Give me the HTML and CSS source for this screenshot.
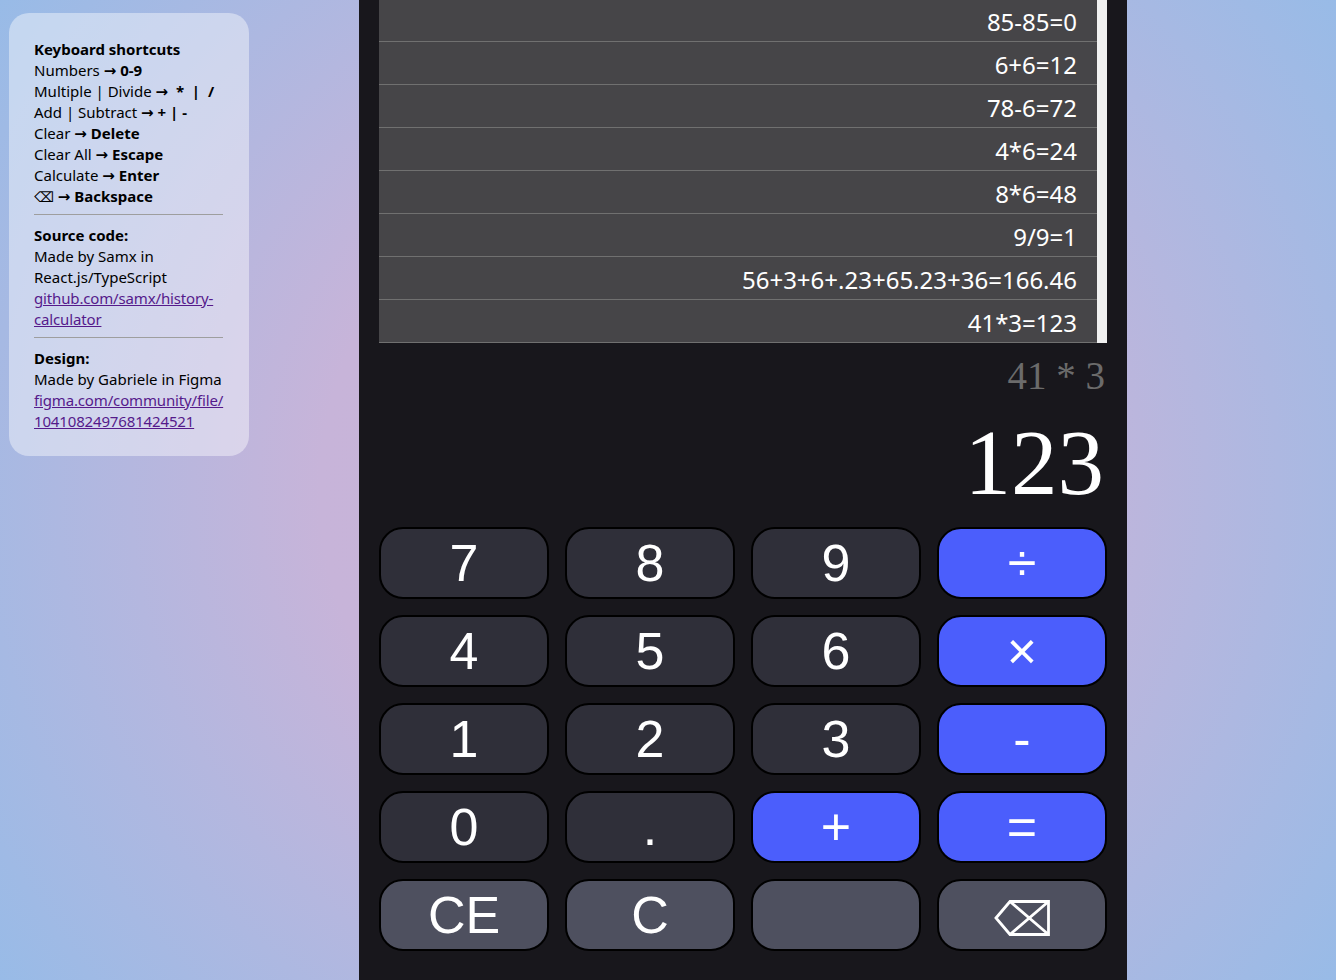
FILE: index.html
```html
<!DOCTYPE html>
<html lang="en">
<head>
<meta charset="utf-8">
<title>History Calculator</title>
<link rel="stylesheet" href="styles.css">
</head>
<body>
<div class="page">
  <aside class="info">
    <section class="info-section">
      <div class="info-title">Keyboard shortcuts</div>
      <div>Numbers <span class="arrow">→</span> <b>0-9</b></div>
      <div>Multiple | Divide <span class="arrow">→</span> <b>&nbsp;*&nbsp; |&nbsp; /</b></div>
      <div>Add | Subtract <span class="arrow">→</span> <b>+ | -</b></div>
      <div>Clear <span class="arrow">→</span> <b>Delete</b></div>
      <div>Clear All <span class="arrow">→</span> <b>Escape</b></div>
      <div>Calculate <span class="arrow">→</span> <b>Enter</b></div>
      <div><span class="bs">⌫</span> <span class="arrow">→</span> <b>Backspace</b></div>
    </section>
    <hr class="divider">
    <section class="info-section">
      <div class="info-title">Source code:</div>
      <div>Made by Samx in React.js/TypeScript</div>
      <a class="info-link" href="#">github.com/samx/history-calculator</a>
    </section>
    <hr class="divider">
    <section class="info-section">
      <div class="info-title">Design:</div>
      <div>Made by Gabriele in Figma</div>
      <a class="info-link" href="#">figma.com/community/file/<wbr>1041082497681424521</a>
    </section>
  </aside>

  <main class="calc">
    <div class="history-wrap">
      <ul class="history">
        <li class="history-row">85-85=0</li>
        <li class="history-row">6+6=12</li>
        <li class="history-row">78-6=72</li>
        <li class="history-row">4*6=24</li>
        <li class="history-row">8*6=48</li>
        <li class="history-row">9/9=1</li>
        <li class="history-row">56+3+6+.23+65.23+36=166.46</li>
        <li class="history-row">41*3=123</li>
      </ul>
      <div class="scrollbar"></div>
    </div>

    <div class="expr">41 * 3</div>
    <div class="result">123</div>

    <div class="keys">
      <button class="key num">7</button>
      <button class="key num">8</button>
      <button class="key num">9</button>
      <button class="key op">÷</button>
      <button class="key num">4</button>
      <button class="key num">5</button>
      <button class="key num">6</button>
      <button class="key op">×</button>
      <button class="key num">1</button>
      <button class="key num">2</button>
      <button class="key num">3</button>
      <button class="key op">-</button>
      <button class="key num">0</button>
      <button class="key num">.</button>
      <button class="key op">+</button>
      <button class="key op">=</button>
      <button class="key fn">CE</button>
      <button class="key fn">C</button>
      <button class="key fn"></button>
      <button class="key fn" aria-label="Backspace">
        <svg class="bs-icon" width="56" height="36" viewBox="0 0 56 36" fill="none" stroke="#fff" stroke-width="2.8" stroke-linejoin="miter">
          <path d="M2 18 L16 1.5 L54.5 1.5 L54.5 34.5 L16 34.5 Z"/>
          <path d="M16 34.5 L54.5 1.5 M16 1.5 L54.5 34.5"/>
        </svg>
      </button>
    </div>
  </main>
</div>
</body>
</html>
```

FILE: styles.css
```css
* {
  box-sizing: border-box;
}

html, body {
  margin: 0;
  padding: 0;
  height: 980px;
  overflow: hidden;
}

body {
  background: radial-gradient(circle farthest-corner at 50% 50%, #cbb3d8 0%, #c7b4d9 42%, #b4b7df 65%, #98bbe7 100%);
  font-family: "Noto Sans", "Open Sans", sans-serif;
}

.page {
  display: flex;
  align-items: flex-start;
  gap: 110px;
  padding-left: 9px;
  height: 980px;
}

/* ---------- info panel ---------- */
.info {
  flex: 0 0 240px;
  width: 240px;
  min-width: 0;
  margin-top: 13px;
  padding: 26px 25px 24px 25px;
  background: rgba(255, 255, 255, 0.42);
  border-radius: 20px;
  font-size: 15px;
  line-height: 21px;
  color: #000;
}

.info-section b,
.info-title {
  font-weight: 700;
}

.arrow {
  font-family: "DejaVu Sans", sans-serif;
  font-weight: 700;
  font-size: 15px;
  line-height: 0;
}

.bs {
  font-family: "DejaVu Sans", sans-serif;
  font-size: 14px;
  line-height: 0;
}

.divider {
  border: 0;
  border-top: 1px solid #9e9e9e;
  height: 0;
  margin: 7px 1px 10px 0;
}

.info-link {
  color: #551a8b;
  text-decoration: underline;
  letter-spacing: -0.15px;
}

/* ---------- calculator ---------- */
.calc {
  flex: 0 0 768px;
  height: 980px;
  background: #18171c;
  padding: 0 20px;
}

.history-wrap {
  display: flex;
  height: 343px;
}

.history {
  flex: 1;
  margin: 0;
  padding: 0;
  list-style: none;
  height: 343px;
  overflow: hidden;
  display: flex;
  flex-direction: column;
  justify-content: flex-end;
  background: #464548;
}

.history-row {
  flex: 0 0 43px;
  height: 43px;
  padding: 3px 20px 0 0;
  line-height: 39px;
  border-bottom: 1px solid #707070;
  text-align: right;
  font-size: 24px;
  color: #fff;
}

.scrollbar {
  flex: 0 0 10px;
  background: #f1f1f1;
}

.expr {
  margin-top: 12px;
  text-align: right;
  font-family: "Liberation Serif", serif;
  font-size: 39px;
  line-height: 42px;
  color: #6b6b6b;
  padding-right: 2px;
}

.result {
  margin-top: 16px;
  text-align: right;
  font-family: "Liberation Serif", serif;
  font-size: 93px;
  line-height: 100px;
  color: #fff;
  padding-right: 3px;
}

.keys {
  margin-top: 14px;
  display: grid;
  grid-template-columns: repeat(4, 170px);
  grid-auto-rows: 72px;
  gap: 16px;
}

.key {
  border: 2px solid #000;
  border-radius: 24px;
  font-family: "Liberation Sans", Arial, sans-serif;
  font-size: 52px;
  color: #fff;
  padding: 0;
  display: flex;
  align-items: center;
  justify-content: center;
  line-height: 1;
}

.num {
  background: #2f2f39;
}

.op {
  background: #4b5efc;
}

.fn {
  background: #4e505f;
}

.bs-icon {
  display: block;
  margin-top: 6px;
}
```
